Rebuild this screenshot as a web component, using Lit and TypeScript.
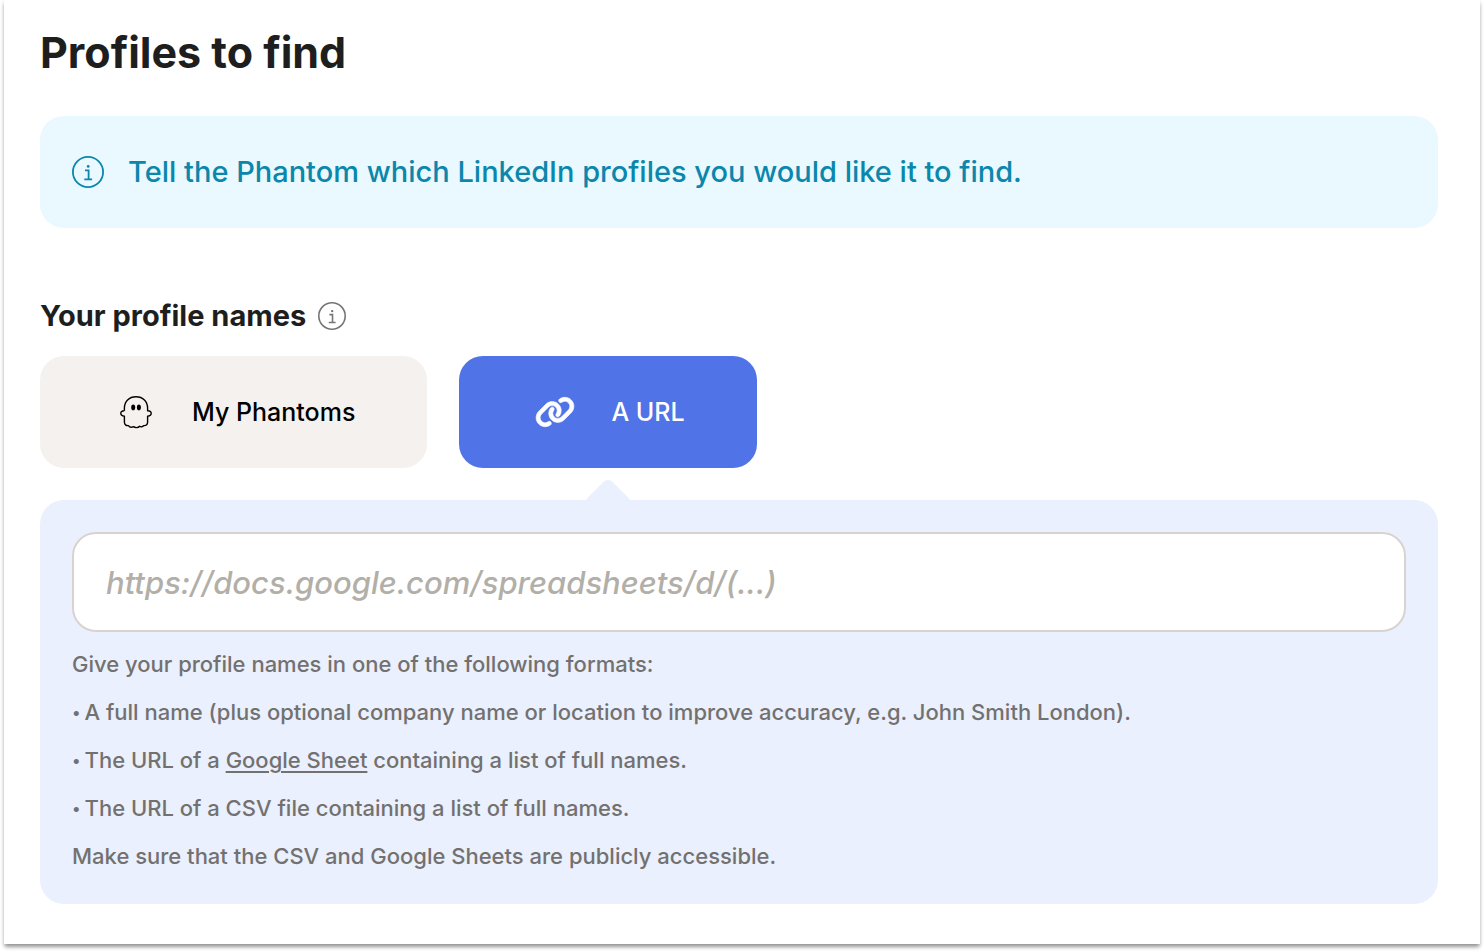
import { LitElement, html, css, svg } from "lit";
import { customElement, state } from "lit/decorators.js";

const infoGlyph = svg`
  <circle cx="16" cy="16" r="15.1" fill="none" stroke="currentColor" stroke-width="1.8" />
  <circle cx="16.2" cy="10.4" r="1.4" fill="currentColor" />
  <path d="M13 14.4h3.6v9M12.3 23.4h7.8" fill="none" stroke="currentColor" stroke-width="1.8" />`;

const ghostGlyph = svg`
  <path d="M12.4 22.8V20.2C12.4 13.4 17 8.8 24 8.8S35.6 13.4 35.6 20.2V22.8C37.6 22.6 39.2 23.6 39.2 25.2S37.4 28 35.6 28.2V34.4C35.4 36.8 34 37.9 31.6 37.6C30.8 38.9 28.9 39.3 27.6 38.3C26.2 40 22.8 40 21.4 38.6C19.4 39.6 17.4 39 16.4 37.6C14 37.8 12.5 36.6 12.4 34.2V28.2C10.6 28 8.8 26.8 8.8 25.2S10.4 22.6 12.4 22.8" fill="none" stroke="currentColor" stroke-width="1.4" stroke-linejoin="round" />
  <ellipse cx="21.2" cy="19.4" rx="2" ry="2.8" fill="currentColor" />
  <ellipse cx="26.9" cy="19.4" rx="2" ry="2.8" fill="currentColor" />`;

const linkGlyph = svg`
  <g transform="translate(4 8) scale(0.0625)" fill="currentColor" stroke="currentColor" stroke-width="10">
    <path d="M579.800 267.700c56.500-56.500 56.500-148 0-204.500c-50-50-128.800-56.500-186.300-15.400l-1.600 1.100c-14.400 10.300-17.700 30.300-7.400 44.600s30.300 17.700 44.600 7.400l1.600-1.100c32.100-22.900 76-19.300 103.800 8.600c31.500 31.500 31.500 82.500 0 114L422.300 334.800c-31.500 31.500-82.500 31.500-114 0c-27.900-27.900-31.500-71.800-8.600-103.800l1.100-1.600c10.300-14.400 6.900-34.400-7.400-44.600s-34.400-6.900-44.600 7.400l-1.100 1.600C206.500 251.200 213 330 263 380c56.500 56.500 148 56.500 204.500 0L579.800 267.700zM60.200 244.300c-56.500 56.500-56.500 148 0 204.500c50 50 128.800 56.500 186.300 15.400l1.600-1.100c14.400-10.300 17.700-30.300 7.400-44.600s-30.300-17.700-44.600-7.400l-1.600 1.100c-32.100 22.900-76 19.300-103.800-8.600C74 372 74 321 105.500 289.500L217.700 177.200c31.500-31.500 82.500-31.500 114 0c27.900 27.900 31.500 71.800 8.600 103.900l-1.100 1.600c-10.300 14.400-6.900 34.400 7.400 44.600s34.400 6.900 44.600-7.400l1.100-1.600C433.500 260.800 427 182 377 132c-56.500-56.500-148-56.500-204.500 0L60.200 244.300z" />
  </g>`;

const sources = [
  { id: "phantoms", label: "My Phantoms", icon: ghostGlyph },
  { id: "url", label: "A URL", icon: linkGlyph },
];

@customElement("app-root")
export class AppRoot extends LitElement {
  @state() private source = "url";

  static styles = css`
    :host {
      display: block;
      font-family: Inter, "Liberation Sans", sans-serif;
      color: #1e1e1e;
    }
    .card {
      display: flow-root;
      margin: 0 4px 8px;
      padding: 24px 42px 40px 36px;
      background: #fff;
      box-shadow:
        0 4px 4px -1px rgba(0, 0, 0, 0.3),
        0 2px 4px rgba(0, 0, 0, 0.2);
    }
    .title {
      margin: 0 0 36px;
      font-size: 43px;
      line-height: 56px;
      font-weight: 700;
    }
    .banner {
      display: flex;
      align-items: center;
      gap: 24px;
      padding: 32px;
      border-radius: 24px;
      background: #eaf8ff;
      color: #0b87ac;
      font-size: 29px;
      line-height: 48px;
      font-weight: 500;
    }
    .banner p {
      margin: 0;
    }
    .banner svg {
      width: 32px;
      height: 32px;
      flex: none;
    }
    .label-row {
      display: flex;
      align-items: center;
      gap: 12px;
      margin: 68px 0 20px;
    }
    .label {
      font-size: 29px;
      line-height: 40px;
      font-weight: 700;
    }
    .hint {
      display: flex;
      padding: 0;
      border: 0;
      background: none;
      color: #757575;
      cursor: pointer;
    }
    .hint svg {
      width: 28px;
      height: 28px;
    }
    .sources {
      display: flex;
      flex-wrap: wrap;
      gap: 32px;
      margin-bottom: 32px;
    }
    .source {
      position: relative;
      display: flex;
      align-items: center;
      gap: 32px;
      padding: 32px 72px;
      border: 0;
      border-radius: 24px;
      background: #f5f1ef;
      color: #000;
      font: inherit;
      font-size: 25px;
      line-height: 48px;
      font-weight: 500;
      cursor: pointer;
    }
    .source svg {
      width: 48px;
      height: 48px;
    }
    .source[aria-pressed="true"] {
      background: #5073e7;
      color: #fff;
    }
    .source[aria-pressed="true"]::after {
      content: "";
      position: absolute;
      top: calc(100% + 17px);
      left: calc(50% - 18px);
      width: 36px;
      height: 36px;
      border-radius: 6px;
      background: #eaf0fd;
      transform: rotate(45deg);
    }
    .panel {
      padding: 32px 32px 24px;
      border-radius: 24px;
      background: #eaf0fd;
      color: #737170;
      font-size: 22px;
      line-height: 48px;
      font-weight: 500;
    }
    .field {
      display: block;
      box-sizing: border-box;
      width: 100%;
      height: 100px;
      margin-bottom: 8px;
      padding: 24px 32px;
      border: 2px solid #d9d3d0;
      border-radius: 24px;
      background: #fff;
      color: #1e1e1e;
      font: inherit;
      font-size: 31px;
      line-height: 48px;
    }
    .field::placeholder {
      color: #b2afa9;
      font-style: italic;
      opacity: 1;
    }
    .panel p {
      margin: 0;
    }
    .formats {
      margin: 0;
      padding: 0;
      list-style: none;
    }
    .formats li {
      display: flex;
      gap: 4px;
    }
    .formats li::before {
      content: "•";
      font-size: 16px;
    }
    .panel a {
      color: inherit;
      text-decoration: underline;
      text-decoration-thickness: 2px;
      text-underline-offset: 3px;
    }
  `;

  render() {
    return html`
      <main class="card">
        <h1 class="title">Profiles to find</h1>
        <div class="banner">
          <svg viewBox="0 0 32 32" aria-hidden="true">${infoGlyph}</svg>
          <p>Tell the Phantom which LinkedIn profiles you would like it to find.</p>
        </div>
        <div class="label-row">
          <label class="label" for="names">Your profile names</label>
          <button class="hint" type="button" aria-label="About profile names">
            <svg viewBox="0 0 32 32" aria-hidden="true">${infoGlyph}</svg>
          </button>
        </div>
        <div class="sources">
          ${sources.map(
            (s) => html`<button
              class="source"
              type="button"
              aria-pressed=${this.source === s.id ? "true" : "false"}
              @click=${() => (this.source = s.id)}
            >
              <svg viewBox="0 0 48 48" aria-hidden="true">${s.icon}</svg>
              <span>${s.label}</span>
            </button>`
          )}
        </div>
        <section class="panel">
          <input
            class="field"
            id="names"
            type="url"
            placeholder="https://docs.google.com/spreadsheets/d/(...)"
          />
          <p>Give your profile names in one of the following formats:</p>
          <ul class="formats">
            <li><span>A full name (plus optional company name or location to improve accuracy, e.g. John Smith London).</span></li>
            <li><span>The URL of a <a href="#sheet">Google Sheet</a> containing a list of full names.</span></li>
            <li><span>The URL of a CSV file containing a list of full names.</span></li>
          </ul>
          <p>Make sure that the CSV and Google Sheets are publicly accessible.</p>
        </section>
      </main>
    `;
  }
}
